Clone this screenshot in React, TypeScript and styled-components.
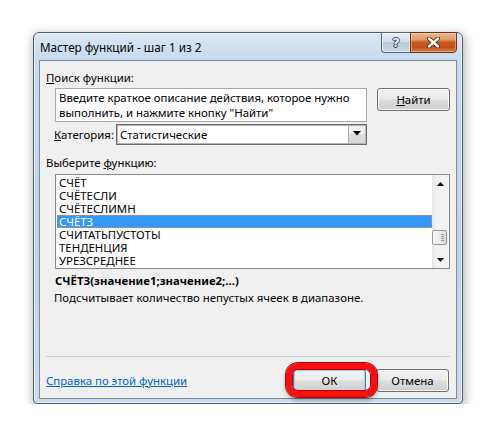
import styled, { createGlobalStyle } from "styled-components";

const GlobalStyle = createGlobalStyle`
  html, body {
    margin: 0;
    background: #fff;
  }
  body {
    font-family: "Noto Sans", "Open Sans", sans-serif;
    font-size: 11.4px;
    color: #000;
  }
`;

const functions = [
  "СЧЁТ",
  "СЧЁТЕСЛИ",
  "СЧЁТЕСЛИМН",
  "СЧЁТЗ",
  "СЧИТАТЬПУСТОТЫ",
  "ТЕНДЕНЦИЯ",
  "УРЕЗСРЕДНЕЕ",
];

const App = () => {
  const selected = "СЧЁТЗ";

  return (
    <>
      <GlobalStyle />
      <Page>
        <Window>
          <TitleBar>
            <TitleText>Мастер функций - шаг 1 из 2</TitleText>
            <TitleButtons>
              <HelpButton>?</HelpButton>
              <CloseButton>
                <svg width="13" height="11" viewBox="0 0 13 11">
                  <path
                    d="M2 1.5 L11 9.5 M11 1.5 L2 9.5"
                    stroke="#5a2a10"
                    strokeWidth="4.2"
                    strokeLinecap="round"
                  />
                  <path
                    d="M2 1.5 L11 9.5 M11 1.5 L2 9.5"
                    stroke="#fff"
                    strokeWidth="2.4"
                    strokeLinecap="round"
                  />
                </svg>
              </CloseButton>
            </TitleButtons>
          </TitleBar>

          <Client>
            <Label $top={9}>
              <u>П</u>оиск функции:
            </Label>
            <SearchRow>
              <SearchBox>
                Введите краткое описание действия, которое нужно
                <br />
                выполнить, и нажмите кнопку "Найти"
              </SearchBox>
              <Button>
                <u>Н</u>айти
              </Button>
            </SearchRow>

            <CategoryRow>
              <CategoryLabel>
                <u>К</u>атегория:
              </CategoryLabel>
              <Select>
                <SelectValue>Статистические</SelectValue>
                <DropButton>
                  <svg width="8" height="5" viewBox="0 0 8 5">
                    <polygon points="0,0 8,0 4,4.5" fill="#000" />
                  </svg>
                </DropButton>
              </Select>
            </CategoryRow>

            <Label $top={10}>
              Выберите <u>ф</u>ункцию:
            </Label>
            <ListBox>
              <Items>
                {functions.map((f) => (
                  <Item key={f} $selected={f === selected}>
                    {f}
                  </Item>
                ))}
              </Items>
              <ScrollBar>
                <ArrowButton>
                  <svg width="7" height="4" viewBox="0 0 7 4">
                    <polygon points="3.5,0 7,4 0,4" fill="#000" />
                  </svg>
                </ArrowButton>
                <Track>
                  <Thumb $offset={38}>
                    <Grip />
                  </Thumb>
                </Track>
                <ArrowButton>
                  <svg width="7" height="4" viewBox="0 0 7 4">
                    <polygon points="0,0 7,0 3.5,4" fill="#000" />
                  </svg>
                </ArrowButton>
              </ScrollBar>
            </ListBox>

            <Signature>СЧЁТЗ(значение1;значение2;...)</Signature>
            <Description>
              Подсчитывает количество непустых ячеек в диапазоне.
            </Description>

            <Spacer />
            <Separator />

            <Footer>
              <HelpLink href="#">Справка по этой функции</HelpLink>
              <FooterButtons>
                <OkWrap>
                  <Button $default>ОК</Button>
                  <Ring />
                </OkWrap>
                <Button>Отмена</Button>
              </FooterButtons>
            </Footer>
          </Client>
        </Window>
      </Page>
    </>
  );
};

export default App;

const Page = styled.div`
  padding: 32px 0 0 33px;
`;

const Window = styled.div`
  box-sizing: border-box;
  width: 430px;
  height: 372px;
  display: flex;
  flex-direction: column;
  padding: 0 5px 4px 5px;
  border: 1px solid #4c5c6e;
  border-radius: 6px 6px 4px 4px;
  background: linear-gradient(180deg, #dbe7f5 0px, #c7daef 26px, #bfd3eb 60%, #c9dbee 100%);
  box-shadow: inset 0 0 0 1px rgba(255, 255, 255, 0.6),
    1px 3px 10px 2px rgba(0, 0, 0, 0.25);
`;

const TitleBar = styled.div`
  display: flex;
  align-items: flex-start;
  height: 27px;
`;

const TitleText = styled.div`
  margin: 6px 0 0 1px;
  line-height: 16px;
  font-size: 11.7px;
  color: #000;
`;

const TitleButtons = styled.div`
  margin-left: auto;
  margin-top: -1px;
  display: flex;
`;

const HelpButton = styled.div`
  box-sizing: border-box;
  width: 29px;
  height: 21px;
  display: flex;
  align-items: center;
  justify-content: center;
  border: 1px solid #55657a;
  border-right: none;
  border-radius: 0 0 0 4px;
  background: linear-gradient(180deg, #e7eef6 0%, #d3dfeb 45%, #b9c9da 50%, #c9d7e5 100%);
  box-shadow: inset 0 0 0 1px rgba(255, 255, 255, 0.5);
  font-family: "DejaVu Sans", sans-serif;
  font-weight: bold;
  font-size: 13px;
  color: #e9eef3;
  text-shadow: -1px 0 #3d4a58, 1px 0 #3d4a58, 0 -1px #3d4a58, 0 1px #3d4a58;
`;

const CloseButton = styled.div`
  box-sizing: border-box;
  width: 47px;
  height: 21px;
  display: flex;
  align-items: center;
  justify-content: center;
  border: 1px solid #6b3316;
  border-radius: 0 0 4px 0;
  background: linear-gradient(180deg, #ecb895 0%, #e09a6a 35%, #c95a1e 48%, #c1501a 75%, #d7814c 100%);
  box-shadow: inset 0 0 0 1px rgba(255, 220, 190, 0.45);
`;

const Client = styled.div`
  flex: 1;
  display: flex;
  flex-direction: column;
  box-sizing: border-box;
  border: 1px solid #7c8b9c;
  background: #f0f0f0;
  padding-bottom: 6px;
`;

const Label = styled.div<{ $top: number }>`
  margin: ${({ $top }) => $top}px 0 0 6px;
  line-height: 15px;
  height: 15px;
`;

const SearchRow = styled.div`
  display: flex;
  align-items: flex-start;
  margin: 3px 0 0 15px;
`;

const SearchBox = styled.div`
  box-sizing: border-box;
  width: 312px;
  height: 34px;
  padding: 1px 0 0 3px;
  border: 1px solid #a6a9ae;
  background: #fff;
  line-height: 15px;
  white-space: nowrap;
  overflow: hidden;
`;

const Button = styled.div<{ $default?: boolean }>`
  box-sizing: border-box;
  width: 73px;
  height: 23px;
  margin-left: ${({ $default }) => ($default ? 0 : 10)}px;
  display: flex;
  align-items: center;
  justify-content: center;
  border: 1px solid ${({ $default }) => ($default ? "#3c7fb1" : "#707070")};
  border-radius: 3px;
  background: linear-gradient(180deg, #f2f2f2 0%, #ebebeb 48%, #dddddd 52%, #cfcfcf 100%);
  box-shadow: inset 0 0 0 1px
    ${({ $default }) => ($default ? "#9fd0f2" : "rgba(255, 255, 255, 0.75)")};
  color: #000;
`;

const CategoryRow = styled.div`
  display: grid;
  grid-template-columns: 62px 251px;
  align-items: center;
  margin: 2px 0 0 14px;
`;

const CategoryLabel = styled.div`
  line-height: 15px;
`;

const Select = styled.div`
  box-sizing: border-box;
  height: 21px;
  display: flex;
  border: 1px solid #6a6a6a;
  box-shadow: inset 0 0 0 1px #b4b4b4;
  background: #fff;
`;

const SelectValue = styled.div`
  flex: 1;
  padding-left: 3px;
  line-height: 19px;
`;

const DropButton = styled.div`
  box-sizing: border-box;
  width: 17px;
  margin: 1px;
  display: flex;
  justify-content: center;
  padding-top: 5px;
  border-left: 1px solid #a8a8a8;
  background: linear-gradient(180deg, #f4f4f4 0%, #eeeeee 45%, #dedede 50%, #d6d6d6 100%);
`;

const ListBox = styled.div`
  box-sizing: border-box;
  height: 95px;
  margin: 4px 6px 0 15px;
  display: flex;
  border: 1px solid #828790;
  background: #fff;
`;

const Items = styled.div`
  flex: 1;
  padding: 1px 0;
`;

const Item = styled.div<{ $selected?: boolean }>`
  height: 13px;
  line-height: 13px;
  margin-left: 1px;
  padding-left: 2px;
  box-sizing: border-box;
  color: ${({ $selected }) => ($selected ? "#fff" : "#000")};
  background: ${({ $selected }) => ($selected ? "#3399ff" : "transparent")};
  outline: ${({ $selected }) => ($selected ? "1px dotted #e88a3c" : "none")};
  outline-offset: -1px;
`;

const ScrollBar = styled.div`
  width: 17px;
  display: flex;
  flex-direction: column;
  background: linear-gradient(90deg, #e6e6e6 0%, #f3f3f3 30%, #f1f1f1 100%);
`;

const ArrowButton = styled.div`
  height: 17px;
  display: flex;
  align-items: center;
  justify-content: center;
`;

const Track = styled.div`
  flex: 1;
`;

const Thumb = styled.div<{ $offset: number }>`
  box-sizing: border-box;
  width: 15px;
  height: 15px;
  margin: ${({ $offset }) => $offset}px 0 0 0;
  border: 1px solid #979797;
  border-radius: 2px;
  background: linear-gradient(90deg, #f6f6f6 0%, #ececec 50%, #dcdcdc 100%);
  display: flex;
  align-items: center;
  justify-content: flex-end;
  padding-right: 2px;
`;

const Grip = styled.div`
  width: 3px;
  height: 8px;
  background: repeating-linear-gradient(180deg, #9a9a9a 0 1px, transparent 1px 2px);
`;

const Signature = styled.div`
  margin: 4px 0 0 15px;
  line-height: 15px;
  font-weight: bold;
`;

const Description = styled.div`
  margin: 2px 0 0 14px;
  line-height: 15px;
`;

const Spacer = styled.div`
  flex: 1;
`;

const Separator = styled.div`
  height: 1px;
  margin: 0 6px 0 6px;
  background: #c5d0dc;
`;

const Footer = styled.div`
  display: flex;
  align-items: center;
  margin: 12px 7px 0 6px;
`;

const HelpLink = styled.a`
  color: #0066cc;
  text-decoration: underline;
  line-height: 15px;
`;

const FooterButtons = styled.div`
  margin-left: auto;
  display: flex;
`;

const OkWrap = styled.div`
  position: relative;
`;

const Ring = styled.div`
  position: absolute;
  top: -6px;
  left: -7px;
  right: -11px;
  bottom: -5px;
  border: 6px solid #f21212;
  border-radius: 12px;
  box-shadow: 0 0 0 1px #b30000, inset 0 0 0 1px #c00000, 0 3px 4px rgba(0, 0, 0, 0.35);
  pointer-events: none;
`;
